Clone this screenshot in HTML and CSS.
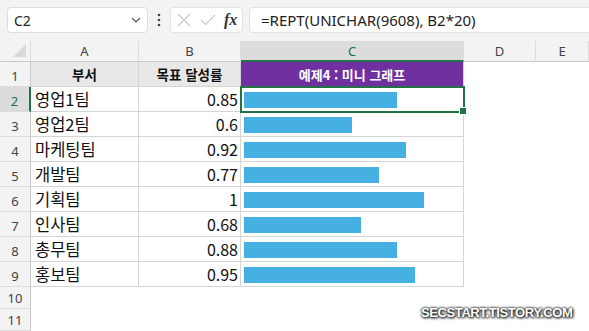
FILE: index.html
```html
<!DOCTYPE html>
<html lang="ko">
<head>
<meta charset="UTF-8">
<title>미니 그래프</title>
<link rel="stylesheet" href="styles.css">
</head>
<body>
<div class="toolbar">
  <div class="namebox">
    <span>C2</span>
    <svg width="10" height="6" viewBox="0 0 10 6"><path d="M1 1 L5 5 L9 1" fill="none" stroke="#555" stroke-width="1.2"/></svg>
  </div>
  <svg class="dots" width="4" height="14" viewBox="0 0 4 14"><circle cx="2" cy="2" r="1.3" fill="#444"/><circle cx="2" cy="7" r="1.3" fill="#444"/><circle cx="2" cy="12" r="1.3" fill="#444"/></svg>
  <div class="fxbox">
    <svg width="14" height="14" viewBox="0 0 14 14"><path d="M1 1 L13 13 M13 1 L1 13" stroke="#c8c8c8" stroke-width="1.2"/></svg>
    <svg width="16" height="12" viewBox="0 0 16 12"><path d="M1 6 L5.5 10.5 L15 1" fill="none" stroke="#c8c8c8" stroke-width="1.2"/></svg>
    <i class="fx">fx</i>
  </div>
  <div class="formula">=REPT(UNICHAR(9608), B2*20)</div>
</div>

<div class="sheet">
  <div class="corner"></div>
  <div class="colhead">A</div>
  <div class="colhead">B</div>
  <div class="colhead active">C</div>
  <div class="colhead">D</div>
  <div class="colhead">E</div>

  <div class="rowhead">1</div>
  <div class="cell head">부서</div>
  <div class="cell head">목표 달성률</div>
  <div class="cell title">예제4 : 미니 그래프</div>
  <div class="blank"></div><div class="blank"></div>

  <div class="rowhead active">2</div>
  <div class="cell">영업1팀</div>
  <div class="cell num">0.85</div>
  <div class="cell bar selected"><span style="width:153px"></span><i class="handle"></i></div>
  <div class="blank"></div><div class="blank"></div>

  <div class="rowhead">3</div>
  <div class="cell">영업2팀</div>
  <div class="cell num">0.6</div>
  <div class="cell bar"><span style="width:108px"></span></div>
  <div class="blank"></div><div class="blank"></div>

  <div class="rowhead">4</div>
  <div class="cell">마케팅팀</div>
  <div class="cell num">0.92</div>
  <div class="cell bar"><span style="width:162px"></span></div>
  <div class="blank"></div><div class="blank"></div>

  <div class="rowhead">5</div>
  <div class="cell">개발팀</div>
  <div class="cell num">0.77</div>
  <div class="cell bar"><span style="width:135px"></span></div>
  <div class="blank"></div><div class="blank"></div>

  <div class="rowhead">6</div>
  <div class="cell">기획팀</div>
  <div class="cell num">1</div>
  <div class="cell bar"><span style="width:180px"></span></div>
  <div class="blank"></div><div class="blank"></div>

  <div class="rowhead">7</div>
  <div class="cell">인사팀</div>
  <div class="cell num">0.68</div>
  <div class="cell bar"><span style="width:117px"></span></div>
  <div class="blank"></div><div class="blank"></div>

  <div class="rowhead">8</div>
  <div class="cell">총무팀</div>
  <div class="cell num">0.88</div>
  <div class="cell bar"><span style="width:153px"></span></div>
  <div class="blank"></div><div class="blank"></div>

  <div class="rowhead">9</div>
  <div class="cell">홍보팀</div>
  <div class="cell num">0.95</div>
  <div class="cell bar"><span style="width:171px"></span></div>
  <div class="blank"></div><div class="blank"></div>

  <div class="rowhead small">10</div>
  <div class="blank"></div><div class="blank"></div><div class="blank"></div><div class="blank"></div><div class="blank"></div>

  <div class="rowhead small">11</div>
  <div class="blank"></div><div class="blank"></div><div class="blank"></div><div class="blank"></div><div class="blank"></div>
</div>

<div class="watermark">SECSTART.TISTORY.COM</div>
</body>
</html>
```

FILE: styles.css
```css
* {
    margin: 0;
    padding: 0;
    box-sizing: border-box;
}

body {
    width: 589px;
    height: 331px;
    overflow: hidden;
    background: #fff;
    font-family: "Noto Sans", "Noto Sans CJK KR", sans-serif;
    position: relative;
}

.toolbar {
    height: 41px;
    background: #f3f3f3;
    display: flex;
    align-items: center;
    padding: 0 0 1px 7px;
}

.namebox {
    width: 141px;
    height: 26px;
    background: #fff;
    border: 1px solid #dcdcdc;
    border-radius: 4px;
    display: flex;
    align-items: center;
    justify-content: space-between;
    padding: 0 6px 0 6px;
    font-size: 14px;
    color: #222;
}

.dots {
    margin: 0 9px 0 9px;
}

.fxbox {
    width: 73px;
    height: 26px;
    background: #fff;
    border: 1px solid #e2e2e2;
    border-radius: 4px;
    display: flex;
    align-items: center;
    gap: 9px;
    padding-left: 6px;
}

.fx {
    font-family: "Liberation Serif", serif;
    font-size: 16px;
    font-weight: bold;
    color: #333;
    margin-left: -1px;
}

.formula {
    flex: 1;
    height: 26px;
    margin-left: 6px;
    background: #fff;
    border: 1px solid #e2e2e2;
    border-right: none;
    border-radius: 4px 0 0 4px;
    padding-left: 11px;
    font-size: 15px;
    line-height: 24px;
    color: #222;
}

.sheet {
    display: grid;
    grid-template-columns: 31px 108px 102px 223px 72px 53px;
    grid-template-rows: 21px repeat(9, 25px) 22px 22px;
}

.corner {
    background: #f3f3f3;
    border-bottom: 1px solid #c8c8c8;
    border-right: 1px solid #dcdcdc;
    position: relative;
}

.corner::after {
    content: "";
    position: absolute;
    right: 4px;
    bottom: 4px;
    border-left: 13px solid transparent;
    border-bottom: 13px solid #d9d9d9;
}

.colhead {
    background: #f3f3f3;
    border-bottom: 1px solid #c8c8c8;
    border-right: 1px solid #dcdcdc;
    text-align: center;
    font-size: 13px;
    line-height: 21px;
    color: #444;
}

.colhead.active {
    background: #dcdcdc;
    color: #217346;
    border-bottom: 2px solid #217346;
}

.rowhead {
    background: #f3f3f3;
    border-right: 1px solid #c8c8c8;
    border-bottom: 1px solid #dcdcdc;
    text-align: center;
    font-size: 13px;
    padding-top: 5px;
    color: #444;
}

.rowhead.small {
    padding-top: 2px;
}

.rowhead.active {
    background: #dcdcdc;
    color: #217346;
    border-right: 2px solid #217346;
}

.cell {
    border-right: 1px solid #d4d4d4;
    border-bottom: 1px solid #d4d4d4;
    font-family: "Noto Sans CJK KR", sans-serif;
    font-size: 16.5px;
    line-height: 24px;
    padding: 0 4px;
    color: #111;
    white-space: nowrap;
    position: relative;
}

.cell.head {
    background: #e8e8e8;
    font-weight: bold;
    font-size: 13.5px;
    text-align: center;
    line-height: 25px;
}

.cell.title {
    background: #7030a0;
    color: #fff;
    font-weight: bold;
    font-size: 13px;
    text-align: center;
    line-height: 25px;
}

.cell.num {
    text-align: right;
    padding-right: 2px;
    font-size: 16px;
}

.cell.bar {
    display: flex;
    align-items: center;
    padding: 0 0 0 3px;
}

.cell.bar span {
    display: block;
    height: 16px;
    margin-top: 1px;
    background: #45b0e1;
}

.selected {
    outline: 2px solid #217346;
    outline-offset: -1px;
    z-index: 1;
}

.handle {
    position: absolute;
    right: -4px;
    bottom: -4px;
    width: 6px;
    height: 6px;
    background: #217346;
    border: 1px solid #fff;
    box-sizing: content-box;
}

.blank {
    background: #fff;
}

.watermark {
    position: absolute;
    left: 421px;
    top: 305px;
    font-family: "Liberation Sans", sans-serif;
    font-weight: bold;
    font-size: 13px;
    letter-spacing: -0.4px;
    color: #fff;
    text-shadow: 0 0 2px #222, 0 0 3px #222, 1px 1px 3px #000;
}
```
